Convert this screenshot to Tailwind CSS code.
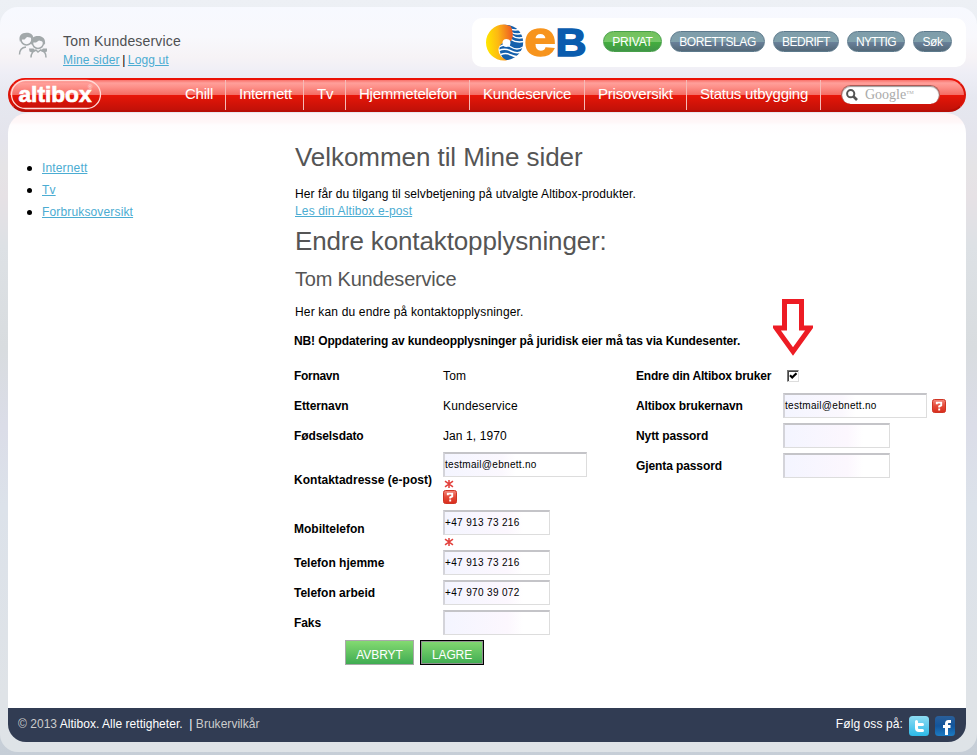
<!DOCTYPE html>
<html lang="no">
<head>
<meta charset="utf-8">
<title>Altibox - Mine sider</title>
<script src="https://cdn.jsdelivr.net/npm/@tailwindcss/browser@4"></script>
</head>
<body class="w-[977px] h-[755px] overflow-hidden bg-linear-to-b from-[#edf0f5] to-[#c6ced7] pt-[7px] font-['Liberation_Sans',Arial,sans-serif] text-[12px] text-black">
<svg class="absolute h-0 w-0">
  <defs>
    <linearGradient id="hg" x1="0" y1="0" x2="0" y2="1"><stop offset="0" stop-color="#f4877c"/><stop offset=".5" stop-color="#e44a38"/><stop offset="1" stop-color="#d92c1c"/></linearGradient>
    <linearGradient id="sun" x1="0" y1="0.4" x2="1" y2="0.3"><stop offset="0" stop-color="#ffe600"/><stop offset=".45" stop-color="#fdb813"/><stop offset="1" stop-color="#ee5a24"/></linearGradient>
    <linearGradient id="tw" x1="0" y1="0" x2="0" y2="1"><stop offset="0" stop-color="#8edcf3"/><stop offset="1" stop-color="#2cb9e8"/></linearGradient>
    <linearGradient id="fb" x1="0" y1="0" x2="0" y2="1"><stop offset="0" stop-color="#2a5f9a"/><stop offset=".5" stop-color="#12559c"/><stop offset="1" stop-color="#1c7cc4"/></linearGradient>
    <symbol id="help" viewBox="0 0 14 14"><rect x=".5" y=".5" width="13" height="13" rx="2" fill="url(#hg)" stroke="#cf3524"/><path d="M4.800 5.200V3.600H9.200V6.400L7.200 7.400V8.400M7.200 9.600V11.400" fill="none" stroke="#fff" stroke-width="1.900"/></symbol>
    <symbol id="star" viewBox="0 0 10 8"><path d="M5 0V8M1 1.200L9 6.800M9 1.200L1 6.800" stroke="#e2403c" stroke-width="1.500"/></symbol>
  </defs>
</svg>
<div class="h-[745px] rounded-[18px] pl-2 w-[977px] bg-[linear-gradient(180deg,#f7f9ff_0px,#f8f8fc_30px,#f6f3f6_50px,#eeeef6_66px,#e6e8f0_90px,#e4e4ec_130px,#e5e4e6_160px,#e6e1e5_190px,#dde1e5_240px,#d8dcdf_340px,#dbdde8_420px,#dce2ea_500px,#dfe3e7_690px,#dee3e7_745px)] pr-[11px]">
  <header class="flex h-[71px] justify-between">
    <div class="flex pt-[25px] pl-[10px]">
      <svg class="w-[30px] h-[28px]" viewBox="0 0 30 28" fill="none" stroke="#a2a8aa" stroke-width="1.500">
        <circle cx="8.500" cy="7.500" r="5.500"/><path d="M2 10C0 3.500 3.500 .8 8.500 .8S15.500 3.500 15 6L9 5 6.500 7.500 3.500 7.500Z" fill="#a2a8aa" stroke="none"/>
        <path d="M1.500 22.500C1.500 18.500 4 15.500 8 15"/>
        <circle cx="20" cy="11" r="5.500"/><path d="M13 13C12 6 15.500 4 20 4S28 6.500 27 13L24.500 9.500 21 8.500 18 10.500 15 10.500Z" fill="#a2a8aa" stroke="none"/>
        <path d="M13 25.500C13 21.500 15.500 18.500 18 18L20 20 22.500 18C26 18.500 28 21.500 28 25.500"/>
        <path d="M11 16.500L15.500 16.500 18 19 14 20.500 11.500 19.500Z" fill="#a2a8aa" stroke="none"/><path d="M29 16.500L25 16.500 22.500 19 26 20.500 29 19.500Z" fill="#a2a8aa" stroke="none"/>
      </svg>
      <div class="pl-[15px] pt-px">
        <div class="text-[14px] leading-4 tracking-[0.17px] text-[#4e5052]">Tom Kundeservice</div>
        <div class="pt-[3px] leading-4 tracking-[0.13px]"><a class="text-[#4bacd2] underline">Mine sider</a> <span class="-mx-px">|</span> <a class="text-[#4bacd2] underline">Logg ut</a></div>
      </div>
    </div>
    <div class="mt-[11px] flex h-[49px] w-[494px] gap-2 rounded-[10px] bg-white pt-[13px]">
      <svg class="-mt-[13px] w-[123px] h-[49px] shrink-0 overflow-visible" viewBox="472 18 123 49">
        <path d="M502 25A17.700 17.700 0 1 1 504 60Q496 48 502 42L510 36Z" fill="#1560ac"/>
        <path d="M507 27.500Q512 31 520 29.500M509 31Q514 35 522 33.500M511 35Q516 39 523 37.500M511 39.500Q516 43 524 41.500M499 47Q505 43 511 47T523 47M499 50.500Q505 48 511 51T522 51.500M501 54.500Q506 52.500 511 55T519 56" fill="none" stroke="#fff" stroke-width="1.500"/>
        <path d="M511 26.500Q507 24.500 504 24.500A18 18 0 0 0 504 60.500H507Q498 56 498.500 49Q499 45 503 43Q510 44 512 39T511 26.500Z" fill="url(#sun)"/>
        <circle cx="506.500" cy="43" r="4" fill="#fff"/>
        <text x="524" y="56" font-family="Liberation Sans" font-weight="700" font-size="50" textLength="32" lengthAdjust="spacingAndGlyphs" fill="#f7941d" stroke="#f7941d" stroke-width="1.500">e</text>
        <text x="555.500" y="56" font-family="Liberation Sans" font-weight="700" font-size="39" textLength="31" lengthAdjust="spacingAndGlyphs" fill="#0a5cae" stroke="#0a5cae" stroke-width="1.500">B</text>
      </svg>
      <a class="h-[21px] w-[59px] rounded-full border border-[#48a04a] bg-[linear-gradient(180deg,#74c05c_0,#74c868_50%,#43ae3e_54%,#409548_100%)] text-center leading-[21px] tracking-[-0.2px] text-white">PRIVAT</a>
      <a class="h-[21px] w-[95px] rounded-full border border-[#5d7a8c] bg-[linear-gradient(180deg,#7f9daa_0,#80a0ab_50%,#698099_54%,#536878_100%)] text-center leading-[21px] tracking-[-0.4px] text-white">BORETTSLAG</a>
      <a class="h-[21px] w-[66px] rounded-full border border-[#5d7a8c] bg-[linear-gradient(180deg,#7f9daa_0,#80a0ab_50%,#698099_54%,#536878_100%)] text-center leading-[21px] tracking-[-0.5px] text-white">BEDRIFT</a>
      <a class="h-[21px] w-[58px] rounded-full border border-[#5d7a8c] bg-[linear-gradient(180deg,#7f9daa_0,#80a0ab_50%,#698099_54%,#536878_100%)] text-center leading-[21px] tracking-[-0.7px] text-white">NYTTIG</a>
      <a class="h-[21px] w-[39px] rounded-full border border-[#5d7a8c] bg-[linear-gradient(180deg,#7f9daa_0,#80a0ab_50%,#698099_54%,#536878_100%)] text-center leading-[21px] tracking-[-0.4px] text-white">Søk</a>
    </div>
  </header>

  <nav class="flex h-[34px] rounded-full border-2 border-t-[#ea1207] border-x-[#dc1408] border-b-[#b80d05] bg-[linear-gradient(180deg,#f8716a_0,#ff9f9a_3px,#fd9089_7px,#f56d64_14.5px,#ea1508_15px,#dd1508_19px,#bd1008_32px)] text-[15px] leading-[28px] tracking-[-0.23px] text-white">
    <svg class="-mt-px -ml-px w-[156px] h-[33px] shrink-0" viewBox="9 79 156 33">
      <rect x="11.500" y="80.500" width="89" height="28" rx="14" fill="none" stroke="#ffdad6" stroke-width="1.300"/>
      <text x="18.500" y="101.500" font-family="Liberation Sans" font-weight="700" font-size="22" letter-spacing="0" textLength="73" lengthAdjust="spacingAndGlyphs" fill="#fff" stroke="#fff" stroke-width=".7">altibox</text>
      <text x="88" y="88.500" font-family="Liberation Sans" font-size="6" letter-spacing="0" fill="#ffe4e0">®</text>
    </svg>
    <a class="w-[61px] border-r border-[#f6bab6] pl-[20px]">Chill</a>
    <a class="w-[78px] border-r border-[#f6bab6] pl-[13px]">Internett</a>
    <a class="w-[42px] border-r border-[#f6bab6] pl-[13px]">Tv</a>
    <a class="w-[124px] border-r border-[#f6bab6] pl-[13px]">Hjemmetelefon</a>
    <a class="w-[115px] border-r border-[#f6bab6] pl-[13px]">Kundeservice</a>
    <a class="w-[102px] border-r border-[#f6bab6] pl-[13px]">Prisoversikt</a>
    <a class="w-[134px] border-r border-[#f6bab6] pl-[13px]">Status utbygging</a>
    <div class="mt-[5px] ml-5 flex h-[19px] w-[99px] items-center rounded-full border-t border-x border-[#ad5b56] bg-white pl-[4px] shadow-[inset_0_1px_1px_#999]">
      <svg class="w-3 h-3" viewBox="0 0 12 12" fill="none" stroke="#555"><circle cx="4.700" cy="4.700" r="3.600" stroke-width="2"/><path d="M7.500 7.500L11 11" stroke-width="2.600"/></svg>
      <span class="pl-[7px] font-['Liberation_Serif',serif] text-[14px] leading-4 tracking-[0px] text-[#aaa]">Google<sup class="text-[5px] -top-[5px]">TM</sup></span>
    </div>
  </nav>

  <main class="mt-px flex h-[595px] rounded-t-[20px] bg-[linear-gradient(180deg,#fff3f4_0,#fff7f8_9px,#fffdfe_12px,#fff_22px)]">
    <ul class="w-[287px] shrink-0 list-none pt-[44px] pl-[19px] leading-[22px] tracking-[0.15px]">
      <li class="flex items-center gap-[10px]"><i class="mt-px h-[5px] w-[5px] rounded-full bg-black"></i><a class="text-[#4bacd2] underline">Internett</a></li>
      <li class="flex items-center gap-[10px]"><i class="mt-px h-[5px] w-[5px] rounded-full bg-black"></i><a class="text-[#4bacd2] underline">Tv</a></li>
      <li class="flex items-center gap-[10px]"><i class="mt-px h-[5px] w-[5px] rounded-full bg-black"></i><a class="text-[#4bacd2] underline">Forbruksoversikt</a></li>
    </ul>
    <section class="w-[671px]">
      <h1 class="pt-[29px] text-[26px] leading-[30px] tracking-[-0.06px] text-[#555]">Velkommen til Mine sider</h1>
      <p class="pt-[14px] leading-[17px] tracking-[0.08px]">Her får du tilgang til selvbetjening på utvalgte Altibox-produkter.<br><a class="text-[#4bacd2] underline tracking-[0.14px]">Les din Altibox e-post</a></p>
      <h1 class="pt-[6px] text-[26px] leading-[30px] tracking-[-0.13px] text-[#555]">Endre kontaktopplysninger:</h1>
      <h2 class="pt-[11px] text-[20px] leading-6 tracking-[-0.2px] text-[#555]">Tom Kundeservice</h2>
      <p class="pt-[13px] leading-4 tracking-[0.16px]">Her kan du endre på kontaktopplysninger.</p>
      <p class="-ml-px pt-[13px] leading-4 font-bold tracking-[-0.12px]">NB! Oppdatering av kundeopplysninger på juridisk eier må tas via Kundesenter.</p>
      <form class="flex pt-[12px]">
        <div class="-ml-px w-[342px]">
          <div class="grid grid-cols-[149px_1fr] items-center">
            <b class="leading-[30px] tracking-[-0.3px]">Fornavn</b><span class="tracking-[0.2px]">Tom</span>
            <b class="leading-[30px] tracking-[-0.1px]">Etternavn</b><span class="tracking-[0.18px]">Kundeservice</span>
            <b class="leading-[30px] tracking-[-0.1px]">Fødselsdato</b><span class="tracking-[0.1px]">Jan 1, 1970</span>
            <b class="tracking-[0.03px]">Kontaktadresse (e-post)</b>
            <div class="h-[58px] pt-px"><div class="h-[25px] w-[144px] border border-[#ddd] border-t-2 border-t-[#c4c4c8] border-l-2 border-l-[#d4d4da] bg-linear-to-r from-[#f4f5ff] via-[#fbf8fe] via-40% to-white to-50% text-[10px] leading-[22px] tracking-[0.3px]">testmail@ebnett.no</div>
              <svg class="mt-[3px] ml-px h-[8px] w-[10px]"><use href="#star"/></svg><svg class="mt-[2px] h-[14px] w-[14px]"><use href="#help"/></svg></div>
            <b>Mobiltelefon</b>
            <div class="h-[40px] pt-px"><div class="h-[25px] w-[107px] border border-[#ddd] border-t-2 border-t-[#c4c4c8] border-l-2 border-l-[#d4d4da] bg-linear-to-r from-[#f4f5ff] via-[#fcf7fe] via-60% to-white to-75% text-[10px] leading-[21px] tracking-[0.35px]">+47 913 73 216</div><svg class="mt-[3px] ml-px h-[8px] w-[10px]"><use href="#star"/></svg></div>
            <b class="-mt-[2px]">Telefon hjemme</b>
            <div class="h-[30px] pt-px"><div class="h-[25px] w-[107px] border border-[#ddd] border-t-2 border-t-[#c4c4c8] border-l-2 border-l-[#d4d4da] bg-linear-to-r from-[#f4f5ff] via-[#fcf7fe] via-60% to-white to-75% text-[10px] leading-[21px] tracking-[0.35px]">+47 913 73 216</div></div>
            <b class="-mt-[2px]">Telefon arbeid</b>
            <div class="h-[30px] pt-px"><div class="h-[25px] w-[107px] border border-[#ddd] border-t-2 border-t-[#c4c4c8] border-l-2 border-l-[#d4d4da] bg-linear-to-r from-[#f4f5ff] via-[#fcf7fe] via-60% to-white to-75% text-[10px] leading-[21px] tracking-[0.35px]">+47 970 39 072</div></div>
            <b class="-mt-[2px] tracking-[-0.1px]">Faks</b>
            <div class="h-[30px] pt-px"><div class="h-[25px] w-[107px] border border-[#ddd] border-t-2 border-t-[#c4c4c8] border-l-2 border-l-[#d4d4da] bg-linear-to-r from-[#f4f5ff] via-[#fcf7fe] via-60% to-white to-75%"></div></div>
          </div>
          <div class="flex gap-[6px] pt-px pl-[51px] text-[12px] text-white">
            <button type="button" class="h-[25px] w-[69px] border border-[#a9a9a9] bg-linear-to-b from-[#83da71] to-[#3eac52] pt-[4px] tracking-[-0.1px]">AVBRYT</button>
            <button type="button" class="h-[25px] w-[64px] border border-black bg-linear-to-b from-[#83da71] to-[#3eac52] pt-[4px] tracking-[-0.1px] outline outline-[#8f8f8f] -outline-offset-2">LAGRE</button>
          </div>
        </div>
        <div class="relative grid h-[120px] grid-cols-[147px_1fr] grid-rows-[30px_30px_30px_30px] items-center">
          <b class="tracking-[-0.18px]">Endre din Altibox bruker</b>
          <span class="ml-[4px] block h-[12px] w-[12px] border border-t-[#777] border-l-[#777] border-r-[#ddd] border-b-[#ddd] bg-white"><svg class="h-[10px] w-[10px]" viewBox="0 0 10 10"><path d="M0 .5H10M.5 0V10" stroke="#444" stroke-width="1"/><path d="M2 4.300L4.200 6.500L8.500 2.200" fill="none" stroke="#000" stroke-width="2.200"/></svg></span>
          <b class="tracking-[-0.15px]">Altibox brukernavn</b>
          <div class="-mt-px flex items-center gap-[5px]"><div class="h-[25px] w-[144px] border border-[#ddd] border-t-2 border-t-[#c4c4c8] border-l-2 border-l-[#d4d4da] bg-linear-to-r from-[#f4f5ff] via-[#fbf8fe] via-40% to-white to-50% text-[10px] leading-[22px] tracking-[0.3px]">testmail@ebnett.no</div><svg class="h-[14px] w-[14px]"><use href="#help"/></svg></div>
          <b class="tracking-[-0.1px]">Nytt passord</b>
          <div class="-mt-[2px] h-[25px] w-[107px] border border-[#ddd] border-t-2 border-t-[#c4c4c8] border-l-2 border-l-[#d4d4da] bg-linear-to-r from-[#f4f5ff] via-[#fcf7fe] via-60% to-white to-75%"></div>
          <b class="tracking-[-0.1px]">Gjenta passord</b>
          <div class="-mt-[2px] h-[25px] w-[107px] border border-[#ddd] border-t-2 border-t-[#c4c4c8] border-l-2 border-l-[#d4d4da] bg-linear-to-r from-[#f4f5ff] via-[#fcf7fe] via-60% to-white to-75%"></div>
          <svg class="absolute -top-[62px] left-[137px] h-[58px] w-[40px]" viewBox="0 0 40 58"><path d="M11.500 2.500H28.500V29H37L20 52.500L3 29H11.500Z" fill="#fff" stroke="#ed1c24" stroke-width="5"/></svg>
        </div>
      </form>
    </section>
  </main>

  <footer class="flex h-[34px] justify-between rounded-b-[18px] bg-[#313c53] pl-[10px] pr-[11px] leading-[33px] text-white">
    <div class="whitespace-pre tracking-[0.03px]"><span class="text-[#ccc]">© 2013</span> Altibox. Alle rettigheter.  | <span class="text-[#ccc]">Brukervilkår</span></div>
    <div class="flex gap-[6px]">
      <span class="tracking-[0.1px]">Følg oss på:</span>
      <svg class="mt-2 h-5 w-5" viewBox="0 0 20 20"><rect width="20" height="20" rx="3.500" fill="url(#tw)"/><path d="M7.500 5.500V12Q7.500 14.500 10 14.500H13.500M7.500 8.500H13.500" fill="none" stroke="#fff" stroke-width="3" stroke-linecap="round"/></svg>
      <svg class="mt-2 h-5 w-5" viewBox="0 0 20 20"><rect width="20" height="20" rx="3.500" fill="url(#fb)"/><path d="M16 5.500H13.500Q11.500 5.500 11.500 8V19M8 10.500H15.500" fill="none" stroke="#fff" stroke-width="3"/></svg>
    </div>
  </footer>
</div>
</body>
</html>
